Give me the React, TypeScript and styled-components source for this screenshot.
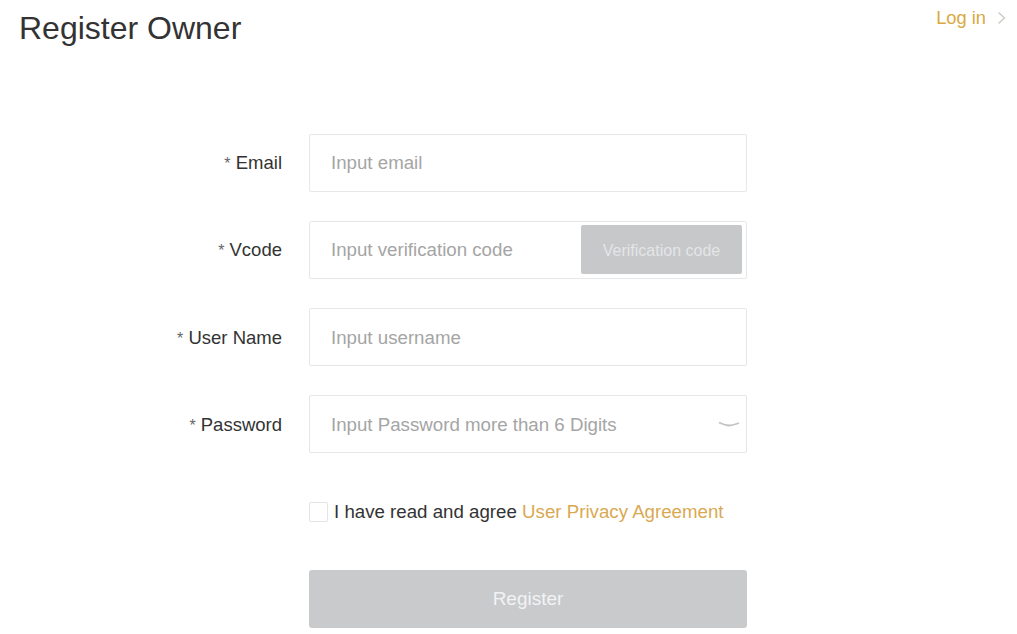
import styled, {createGlobalStyle} from 'styled-components'

const GlobalStyle = createGlobalStyle`
	html, body {
		margin: 0;
		background: #fff;
	}
	body {
		font-family: "Liberation Sans", Arial, sans-serif;
	}
`

const Page = styled.div`
	width: 1017px;
	height: 634px;
	overflow: hidden;
`
const Header = styled.header`
	display: flex;
	justify-content: space-between;
	align-items: flex-start;
	height: 134px;
	padding: 8px 11px 0 19px;
	box-sizing: border-box;
`
const Title = styled.h1`
	margin: 0;
	font-size: 32px;
	line-height: 40px;
	font-weight: 400;
	color: #333;
`
const LoginLink = styled.a`
	display: flex;
	align-items: center;
	gap: 11px;
	font-size: 18.3px;
	line-height: 20px;
	color: #d9a93f;
`
const Form = styled.form`
	display: flex;
	flex-direction: column;
	gap: 29px;
`
const Row = styled.div`
	display: grid;
	grid-template-columns: 282px 438px;
	column-gap: 27px;
	align-items: center;
	height: 58px;
`
const Label = styled.label<{$low?: boolean}>`
	padding-top: ${p => (p.$low ? 2 : 0)}px;
	text-align: right;
	font-size: 18.5px;
	color: #333;
`
const Star = styled.span`
	color: #666;
	font-size: 16px;
`
const Field = styled.div`
	display: flex;
	align-items: center;
	justify-content: space-between;
	height: 58px;
	box-sizing: border-box;
	padding: 0 4px 0 21px;
	background: #fff;
	border: 1px solid #e6e7e9;
	border-radius: 2px;
`
const Placeholder = styled.span<{$low?: boolean}>`
	padding-top: ${p => (p.$low ? 2 : 0)}px;
	font-size: 18.7px;
	color: #a5a5a5;
`
const CodeButton = styled.button`
	width: 161px;
	height: 49px;
	margin-bottom: 2px;
	padding: 4px 0 0;
	border: none;
	border-radius: 2px;
	background: #c6c8ca;
	color: #e4e5e7;
	font: 16px "Liberation Sans", Arial, sans-serif;
`
const ChevronIcon = styled.svg`
	margin-right: 2px;
`
const Agreement = styled.div`
	display: flex;
	align-items: center;
	gap: 6px;
	margin: 49px 0 0 309px;
	height: 20px;
	font-size: 18.7px;
	color: #333;
`
const CheckBox = styled.span`
	width: 19px;
	height: 20px;
	box-sizing: border-box;
	border: 1px solid #e3e4e6;
	border-radius: 2px;
`
const GoldLink = styled.a`
	color: #d9a952;
`
const SubmitRow = styled.div`
	margin: 48px 0 0 309px;
`
const SubmitButton = styled.button`
	display: block;
	width: 438px;
	height: 58px;
	padding: 0;
	border: none;
	border-radius: 3px;
	background: #c8cacc;
	color: #f2f3f4;
	font: 19px "Liberation Sans", Arial, sans-serif;
`

const fields = [
	{label: 'Email', placeholder: 'Input email'},
	{label: 'Vcode', placeholder: 'Input verification code', code: true},
	{label: 'User Name', placeholder: 'Input username', low: true},
	{label: 'Password', placeholder: 'Input Password more than 6 Digits', eye: true, low: true},
]

const App = () => {
	return (
		<Page>
			<GlobalStyle />
			<Header>
				<Title>Register Owner</Title>
				<LoginLink>
					Log in
					<svg width="9" height="14" viewBox="0 0 9 14" fill="none">
						<path d="M1.5 1.500 7.500 7 1.500 12.500" stroke="#c9c9c0" strokeWidth="1.3" />
					</svg>
				</LoginLink>
			</Header>
			<Form>
				{fields.map(field => (
					<Row key={field.label}>
						<Label $low={field.low}><Star>*</Star> {field.label}</Label>
						<Field>
							<Placeholder $low={field.low}>{field.placeholder}</Placeholder>
							{field.code && <CodeButton type="button">Verification code</CodeButton>}
							{field.eye && (
								<ChevronIcon width="22" height="8" viewBox="0 0 22 8" fill="none">
									<path d="M1 2.500C5 4.500 9 5.500 11.500 5.500C15 5.500 18 4 21 3" stroke="#c4c4c4" strokeWidth="1.8" />
								</ChevronIcon>
							)}
						</Field>
					</Row>
				))}
			</Form>
			<Agreement>
				<CheckBox />
				<span>I have read and agree <GoldLink>User Privacy Agreement</GoldLink></span>
			</Agreement>
			<SubmitRow>
				<SubmitButton type="button">Register</SubmitButton>
			</SubmitRow>
		</Page>
	)
}

export default App
